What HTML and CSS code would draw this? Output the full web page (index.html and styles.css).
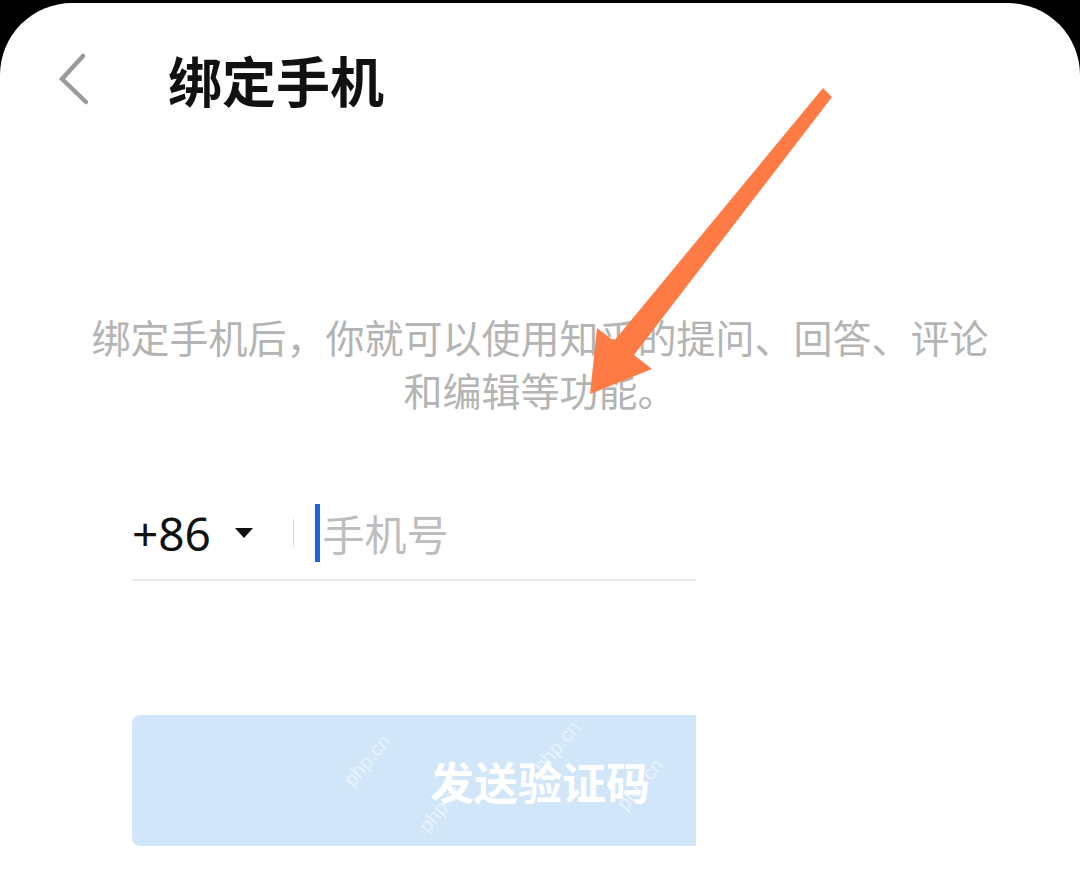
FILE: index.html
```html
<!DOCTYPE html>
<html lang="zh-CN">
<head>
<meta charset="utf-8">
<title>绑定手机</title>
<link rel="stylesheet" href="styles.css">
</head>
<body>
<div class="screen">
  <div class="panel">
    <header class="topbar">
      <svg class="back" width="40" height="56" viewBox="0 0 40 56">
        <polyline points="27,4 6,27 30,50" fill="none" stroke="#9b9b9b" stroke-width="4.5" stroke-linecap="round" stroke-linejoin="miter"/>
      </svg>
      <h1 class="title">绑定手机</h1>
    </header>
    <p class="desc">绑定手机后，你就可以使用知乎的提问、回答、评论<br>和编辑等功能。</p>
    <div class="form">
      <div class="phone-row">
        <span class="code">+86</span>
        <span class="caret-down"></span>
        <span class="sep"></span>
        <span class="cursor"></span>
        <span class="placeholder">手机号</span>
      </div>
      <div class="btn-clip">
        <div class="btn">
          <span class="btn-label">发送验证码</span>
          <span class="wm wm1">php.cn</span>
          <span class="wm wm2">php.cn</span>
          <span class="wm wm3">php.cn</span>
          <span class="wm wm4">php.cn</span>
        </div>
      </div>
    </div>
  </div>
  <svg class="annot-arrow" width="1080" height="886" viewBox="0 0 1080 886">
    <polygon points="823,85 832,94 634,352 652,366 590,391 597,325 614,338" fill="#fe7b45"/>
  </svg>
</div>
</body>
</html>
```

FILE: styles.css
```css
* { box-sizing: border-box; }
html, body {
  margin: 0;
  padding: 0;
  background: #000;
}
body {
  width: 1080px;
  height: 886px;
  overflow: hidden;
  font-family: "Noto Sans", "Noto Sans CJK SC", sans-serif;
}
.screen {
  position: relative;
  width: 1080px;
  height: 886px;
}
.panel {
  margin-top: 3px;
  height: 883px;
  background: #fff;
  border-radius: 72px 72px 0 0;
}
.topbar {
  height: 154px;
  display: flex;
  align-items: center;
  padding-left: 56px;
}
.back {
  display: block;
  flex: none;
}
.title {
  margin: 0 0 0 72px;
  font-family: "Noto Sans CJK SC", sans-serif;
  font-size: 54px;
  font-weight: 700;
  line-height: 1;
  color: #111;
}
.desc {
  margin: 153px 0 0;
  text-align: center;
  font-family: "Noto Sans CJK SC", sans-serif;
  font-size: 39px;
  line-height: 53px;
  color: #b4b4b4;
}
.form {
  margin-top: 87px;
  padding-left: 132px;
}
.phone-row {
  width: 564px;
  height: 78px;
  padding-bottom: 16px;
  border-bottom: 2px solid #e9e9e9;
  display: flex;
  align-items: center;
}
.code {
  font-family: "Noto Sans", sans-serif;
  font-size: 46px;
  line-height: 60px;
  color: #111;
}
.caret-down {
  margin-left: 24px;
  width: 0;
  height: 0;
  border-left: 9px solid transparent;
  border-right: 9px solid transparent;
  border-top: 10px solid #111;
}
.sep {
  margin-left: 40px;
  width: 1.5px;
  height: 28px;
  background: #d8d8d8;
}
.cursor {
  margin-left: 21px;
  width: 5px;
  height: 58px;
  background: #1b66de;
}
.placeholder {
  margin-left: 2px;
  font-family: "Noto Sans CJK SC", sans-serif;
  font-size: 42px;
  line-height: 60px;
  color: #bdbdbd;
}
.btn-clip {
  margin-top: 134px;
  width: 564px;
  height: 131px;
  overflow: hidden;
  border-radius: 8px 0 0 8px;
}
.btn {
  position: relative;
  width: 816px;
  height: 131px;
  background: #d1e6f9;
  display: flex;
  align-items: center;
  justify-content: center;
}
.btn-label {
  font-family: "Noto Sans CJK SC", sans-serif;
  font-size: 44px;
  font-weight: 700;
  color: #fff;
  line-height: 1;
}
.wm {
  position: absolute;
  font-family: "Liberation Sans", sans-serif;
  font-size: 20px;
  color: rgba(255, 255, 255, 0.55);
  transform: rotate(-50deg);
  white-space: nowrap;
}
.wm1 { left: 205px; top: 34px; }
.wm2 { left: 395px; top: 20px; }
.wm3 { left: 478px; top: 58px; }
.wm4 { left: 280px; top: 80px; }
.annot-arrow {
  position: absolute;
  left: 0;
  top: 0;
  pointer-events: none;
}
```
